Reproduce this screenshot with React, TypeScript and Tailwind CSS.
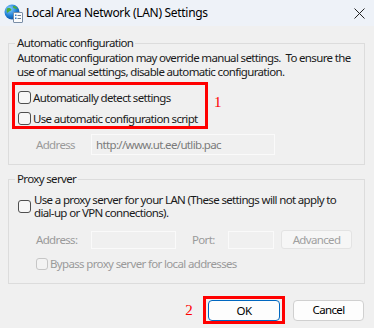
import React from "react";

const Box = ({ disabled = false, size = 13 }: { disabled?: boolean; size?: number }) => (
  <span
    className={
      "block shrink-0 rounded-[3px] border " +
      (disabled ? "border-[#c6c6c6] bg-[#f3f3f3]" : "border-[#4f4f4f] bg-[#f7f7f7]")
    }
    style={{ width: size, height: size }}
  />
);

const GlobeIcon = () => (
  <svg width="19" height="19" viewBox="0 0 19 19" className="shrink-0">
    <defs>
      <radialGradient id="g" cx="35%" cy="30%" r="75%">
        <stop offset="0%" stopColor="#8fd3ff" />
        <stop offset="60%" stopColor="#1f7fd6" />
        <stop offset="100%" stopColor="#0b4f9e" />
      </radialGradient>
    </defs>
    <circle cx="8" cy="8" r="7.5" fill="url(#g)" />
    <path d="M3 4.5 C5 3.5 7 4 7.5 6 C6.5 7.5 4.5 7 3.5 9 C2.5 8 2.3 6 3 4.5Z" fill="#4cae3c" />
    <path d="M9 2 C11 1.8 13 3 13.5 5 C12 5 10.5 4.5 9 3.5Z" fill="#4cae3c" />
    <rect x="9.5" y="8.5" width="9" height="10" rx="0.5" fill="#fbfbfb" stroke="#7a8ea6" strokeWidth="1" />
    <rect x="11" y="10.5" width="1.5" height="1.5" fill="#2f7ad0" />
    <rect x="13.5" y="11" width="3.5" height="1" fill="#6d7f95" />
    <rect x="11" y="13.5" width="1.5" height="1.5" fill="#2f7ad0" />
    <rect x="13.5" y="14" width="3.5" height="1" fill="#6d7f95" />
  </svg>
);

export default function App() {
  return (
    <div
      className="w-[374px] h-[328px] overflow-hidden bg-[#f0f0f0] text-[11.5px] tracking-[-0.65px] text-[#1a1a1a]"
      style={{ fontFamily: '"Noto Sans", "Open Sans", sans-serif' }}
    >
      <div className="h-[26px] bg-[#eef2f8] flex items-center pl-[4px] pr-[9px]">
        <GlobeIcon />
        <span className="ml-[3px] text-[12px] tracking-[-0.3px] text-black whitespace-nowrap">
          Local Area Network (LAN) Settings
        </span>
        <svg width="11" height="11" viewBox="0 0 11 11" className="ml-auto">
          <path d="M0.5 0.5 L10.5 10.5 M10.5 0.5 L0.5 10.5" stroke="#222" strokeWidth="1" />
        </svg>
      </div>

      <div className="px-[8px]">
        <fieldset className="mt-[9px] w-[357px] border border-[#dcdcdc]">
          <legend className="ml-[6px] px-[2px] leading-[16px]">Automatic configuration</legend>
          <div className="pl-[3px] pb-[9px]">
            <p className="pl-[5px] leading-[14px] whitespace-nowrap">
              Automatic configuration may override manual settings.&nbsp; To ensure the
              <br />
              use of manual settings, disable automatic configuration.
            </p>
            <div className="mt-[3px] flex items-start">
              <div className="w-[196px] h-[47px] border-[3px] border-[#ff0000] pl-[3px] pt-[6px] flex flex-col gap-[8px]">
                <label className="h-[13px] flex items-center gap-[2px] whitespace-nowrap">
                  <Box />
                  <span>Automatically detect settings</span>
                </label>
                <label className="h-[13px] flex items-center gap-[2px] whitespace-nowrap">
                  <Box />
                  <span>Use automatic configuration script</span>
                </label>
              </div>
              <span
                className="ml-[6px] mt-[11px] text-[15px] leading-[18px] text-[#ff0000]"
                style={{ fontFamily: '"Liberation Serif", serif' }}
              >
                1
              </span>
            </div>
            <div className="mt-[5px] flex items-center">
              <span className="ml-[24px] w-[55px] text-[#9a9a9a]">Address</span>
              <div className="w-[184px] h-[21px] border border-[#fafafa] px-[4px] flex items-center text-[#7b7b7b]">
                http://www.ut.ee/utlib.pac
              </div>
            </div>
          </div>
        </fieldset>

        <fieldset className="mt-[6px] w-[357px] border border-[#dcdcdc]">
          <legend className="ml-[6px] px-[2px] leading-[16px]">Proxy server</legend>
          <div className="pl-[3px] pb-[13px]">
            <label className="mt-[6px] ml-[6px] flex items-center gap-[3px]">
              <Box />
              <span className="leading-[13px] whitespace-nowrap">
                Use a proxy server for your LAN (These settings will not apply to
                <br />
                dial-up or VPN connections).
              </span>
            </label>
            <div className="mt-[11px] h-[19px] flex items-center text-[#9a9a9a]">
              <span className="ml-[24px] w-[55px]">Address:</span>
              <div className="w-[85px] h-[18px] border border-[#fafafa]" />
              <span className="ml-[16px] w-[36px]">Port:</span>
              <div className="w-[46px] h-[18px] border border-[#fafafa]" />
              <div className="ml-[7px] w-[71px] h-[19px] rounded-[3px] border border-[#e3e3e3] bg-[#f6f6f6] flex items-center justify-center text-[#a0a0a0]">
                Advanced
              </div>
            </div>
            <label className="mt-[8px] ml-[24px] h-[13px] flex items-center gap-[2px] text-[#9a9a9a] whitespace-nowrap">
              <Box disabled size={12} />
              <span>Bypass proxy server for local addresses</span>
            </label>
          </div>
        </fieldset>

        <div className="mt-[12px] flex items-center justify-end pr-[2px]">
          <span
            className="mr-[11px] text-[15px] leading-[18px] text-[#ff0000]"
            style={{ fontFamily: '"Liberation Serif", serif' }}
          >
            2
          </span>
          <div className="w-[82px] h-[28px] border-[3px] border-[#ff0000] px-[2px] pt-[1px]">
            <button className="w-[72px] h-[21px] rounded-[4px] border border-[#0067c0] bg-[#fdfdfd] text-black">
              OK
            </button>
          </div>
          <button className="ml-[8px] w-[71px] h-[21px] rounded-[4px] border border-[#d0d0d0] bg-[#fdfdfd] text-black">
            Cancel
          </button>
        </div>
      </div>
    </div>
  );
}
